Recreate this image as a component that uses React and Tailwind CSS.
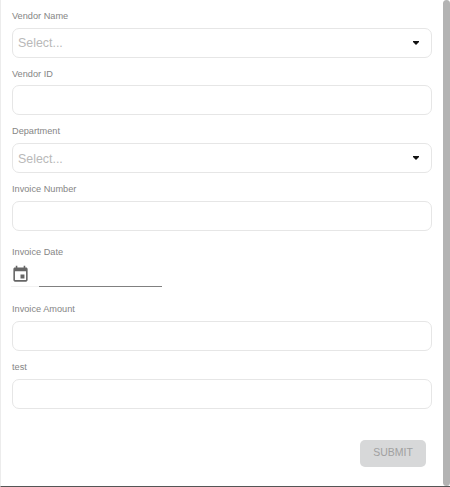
import React from "react";

const font = { fontFamily: '"Liberation Sans", Arial, sans-serif' };

const Label = ({ children }) => (
  <label className="block h-[27.67px] pt-[10px] text-[9.2px] leading-[13px] text-[#858585]">{children}</label>
);

const TextField = ({ label }) => (
  <div>
    <Label>{label}</Label>
    <input className="block h-[30px] w-full rounded-[7px] border border-[#e6e6e6] bg-white outline-none" />
  </div>
);

const SelectField = ({ label }) => (
  <div>
    <Label>{label}</Label>
    <div className="flex h-[30px] items-center justify-between rounded-[7px] border border-[#e6e6e6] bg-white pl-[5px] pr-[12px]">
      <span className="pt-[2px] text-[12.4px] text-[#b9b9b9]">Select...</span>
      <svg width="6" height="4" viewBox="0 0 6 4">
        <path d="M0 0h6v1L3 4 0 1z" fill="#111" />
      </svg>
    </div>
  </div>
);

const App = () => {
  return (
    <div style={font} className="flex h-[487px] w-[450px] overflow-hidden border-b border-l border-b-[#555] border-l-[#ececec] bg-white">
      <form className="w-[442px] shrink-0 px-[11px]">
        <SelectField label="Vendor Name" />
        <TextField label="Vendor ID" />
        <SelectField label="Department" />
        <TextField label="Invoice Number" />

        <div className="mt-[5px]">
          <Label>Invoice Date</Label>
          <div className="flex h-[30px] items-start">
            <div className="ml-[-1px] h-[24px] w-[28px] border-b border-[#f2f2f2]">
              <svg className="mt-[2px]" width="19" height="19" viewBox="0 0 24 24" fill="#666">
                <path d="M17 12h-5v5h5v-5zM16 1v2H8V1H6v2H5c-1.11 0-1.99.9-1.99 2L3 19c0 1.1.89 2 2 2h14c1.1 0 2-.9 2-2V5c0-1.1-.9-2-2-2h-1V1h-2zm3 18H5V8h14v11z" />
              </svg>
            </div>
            <div className="h-[24px] w-[123px] border-b border-[#808080]" />
          </div>
        </div>

        <TextField label="Invoice Amount" />
        <TextField label="test" />

        <div className="mt-[31px] flex justify-end pr-[6px]">
          <button type="button" className="h-[27px] w-[66px] rounded-[5px] bg-[#d7d8d9] text-[10.5px] text-[#a0a0a0]">
            SUBMIT
          </button>
        </div>
      </form>
      <div className="h-[486px] w-[7px] rounded-full bg-[#b3b3b3]" />
    </div>
  );
};

export default App;
